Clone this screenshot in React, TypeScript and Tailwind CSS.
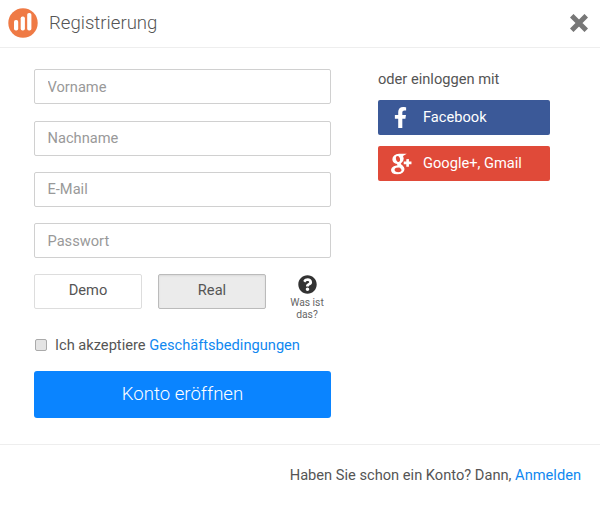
import { FaFacebookF, FaQuestionCircle } from 'react-icons/fa'
import { TiSocialGooglePlus } from 'react-icons/ti'

const fields = ['Vorname', 'Nachname', 'E-Mail', 'Passwort']

export default function App() {
  return (
    <div className="w-[600px] h-[506px] bg-white font-['Roboto',sans-serif] text-[#555] overflow-hidden">
      {/* header */}
      <div className="h-[48px] border-b border-[#eeeeee] flex items-center pl-[8px] pr-[12px]">
        <svg width="30" height="30" viewBox="0 0 30 30" className="mr-[11px] mb-[2px]">
          <circle cx="15" cy="15" r="14.7" fill="#ef7a45" />
          <rect x="6" y="12" width="4.2" height="10.5" rx="1.8" fill="#fff" />
          <rect x="12.7" y="8.5" width="4.2" height="14" rx="1.8" fill="#fff" />
          <rect x="19.2" y="5" width="4.2" height="17.5" rx="1.8" fill="#fff" />
        </svg>
        <span className="text-[18.6px] font-light text-[#555]">Registrierung</span>
        <svg width="18" height="18" viewBox="0 0 18 18" className="ml-auto mb-[1px]">
          <path d="M3.5 3.5 L14.5 14.5 M14.5 3.5 L3.5 14.5" stroke="#777" strokeWidth="5" strokeLinecap="square" />
        </svg>
      </div>

      <div className="h-[396px] flex pl-[34px]">
        {/* form */}
        <div className="w-[297px] pt-[21.4px]">
          <div className="flex flex-col gap-[16.3px]">
            {fields.map((f) => (
              <input
                key={f}
                placeholder={f}
                className="h-[35px] w-full border border-[#d0d0d0] rounded-[2px] px-[12.5px] text-[14.65px] text-[#555] placeholder:text-[#999] outline-none"
              />
            ))}
          </div>

          <div className="flex mt-[15.7px]">
            <button className="w-[108px] h-[35px] shrink-0 border border-[#dddddd] rounded-[2px] bg-white text-[14.65px] text-[#555]">
              Demo
            </button>
            <button className="w-[108px] h-[35px] shrink-0 ml-[16px] border border-[#bbbbbb] rounded-[2px] bg-[#ebebeb] text-[14.65px] text-[#555] shadow-[inset_0_1px_2px_rgba(0,0,0,0.08)]">
              Real
            </button>
            <div className="w-[50px] shrink-0 ml-[16px] flex flex-col items-center">
              <FaQuestionCircle className="text-[#333] text-[19px] mt-[1px]" />
              <div className="text-[10.3px] leading-[12px] text-[#666] text-center mt-[3px]">
                Was ist
                <br />
                das?
              </div>
            </div>
          </div>

          <label className="flex items-center mt-[14px] text-[14.65px] leading-[20px]">
            <span className="w-[12px] h-[12px] ml-[1px] mr-[8px] border border-[#aaa] rounded-[2px] bg-[#e4e4e4]" />
            <span>
              Ich akzeptiere <span className="text-[#1088f0]">Geschäftsbedingungen</span>
            </span>
          </label>

          <button className="w-full h-[47px] mt-[16px] rounded-[3px] bg-[#0a84ff] text-white text-[18.6px] font-light">
            Konto eröffnen
          </button>
        </div>

        {/* social */}
        <div className="w-[172px] ml-[47px] pt-[21px]">
          <div className="text-[14.65px] leading-[20px]">oder einloggen mit</div>
          <div className="h-[35px] mt-[11px] rounded-[2px] bg-[#3b5998] text-white text-[14.65px] flex items-center">
            <span className="w-[45px] flex justify-center">
              <FaFacebookF className="text-[21px]" />
            </span>
            <span>Facebook</span>
          </div>
          <div className="h-[35px] mt-[11px] rounded-[2px] bg-[#e04a39] text-white text-[14.65px] flex items-center">
            <span className="w-[45px] flex justify-center">
              <TiSocialGooglePlus className="text-[31px]" strokeWidth={1} />
            </span>
            <span>Google+, Gmail</span>
          </div>
        </div>
      </div>

      {/* footer */}
      <div className="border-t border-[#eeeeee] h-[62px] flex items-center justify-end pr-[19px] text-[14.65px]">
        <span>
          Haben Sie schon ein Konto? Dann, <span className="text-[#1088f0]">Anmelden</span>
        </span>
      </div>
    </div>
  )
}
